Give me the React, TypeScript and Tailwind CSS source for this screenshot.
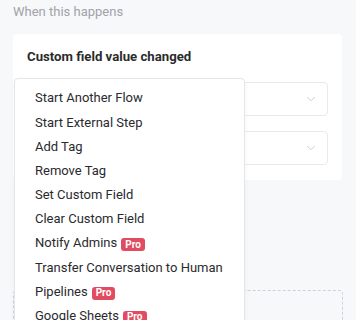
import { ChevronDown } from 'lucide-react'

const ACTIONS: { label: string; pro?: boolean }[] = [
  { label: 'Start Another Flow' },
  { label: 'Start External Step' },
  { label: 'Add Tag' },
  { label: 'Remove Tag' },
  { label: 'Set Custom Field' },
  { label: 'Clear Custom Field' },
  { label: 'Notify Admins', pro: true },
  { label: 'Transfer Conversation to Human' },
  { label: 'Pipelines', pro: true },
  { label: 'Google Sheets', pro: true },
  { label: 'Send Email', pro: true },
]

function SelectBox() {
  return (
    <div className="h-[34px] bg-white border border-[#e8e9ec] rounded flex items-center justify-end pr-[9px]">
      <ChevronDown size={14} strokeWidth={1.5} className="text-[#c4c7cd]" />
    </div>
  )
}

function ProBadge() {
  return (
    <span className="ml-[4px] mt-[3px] inline-flex items-center h-[13px] px-[4px] rounded-[3px] bg-[#e24c60] text-white text-[10px] font-bold leading-none">
      Pro
    </span>
  )
}

export default function App() {
  return (
    <div
      className="relative w-[356px] h-[320px] overflow-hidden bg-[#f7f8fa] px-[13px]"
      style={{ fontFamily: 'Roboto, "Liberation Sans", sans-serif' }}
    >
      <p className="pt-[3px] text-[13px] leading-[18px] text-[#a0a3a9]">When this happens</p>

      <div className="mt-[13px] w-[329px] bg-white rounded px-[14px] pt-[15px] pb-[15px]">
        <p className="text-[13.2px] leading-[16px] font-bold text-[#2b2b2b]">Custom field value changed</p>
        <div className="mt-[17px] flex flex-col gap-[15px]">
          <SelectBox />
          <SelectBox />
        </div>
      </div>

      <div className="mt-[110px] w-[330px] h-[60px] border border-dashed border-[#c9d3dc] rounded" />

      <div className="absolute left-[14px] top-[78px] w-[231px] bg-white border border-[#e3e5e8] rounded-[4px] shadow-[0_2px_6px_rgba(0,0,0,0.04)] pt-[7px]">
        {ACTIONS.map((a) => (
          <div key={a.label} className="h-[24.2px] pl-[20px] flex items-center text-[13px] text-[#2a2a2e]">
            {a.label}
            {a.pro && <ProBadge />}
          </div>
        ))}
      </div>
    </div>
  )
}
